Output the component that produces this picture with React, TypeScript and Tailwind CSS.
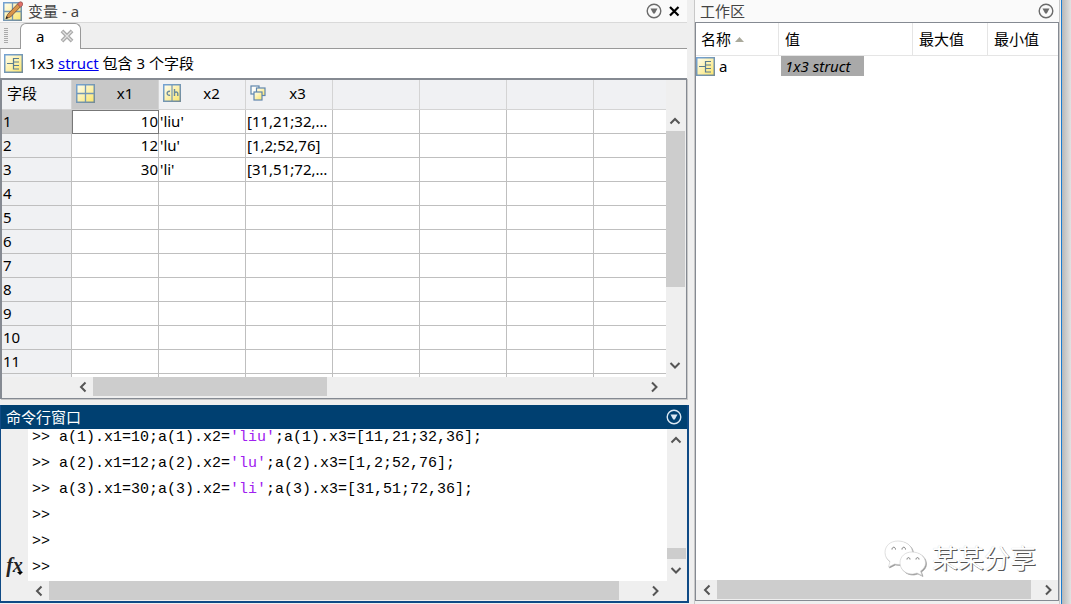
import type { ReactNode } from "react";

interface Field {
  name: string;
  icon: ReactNode;
  values: string[];
}

interface Command {
  before: string;
  text: string;
  after: string;
}

const NUMBERED_ROWS = 11;

const COMMANDS: Command[] = [
  { before: "a(1).x1=10;a(1).x2=", text: "'liu'", after: ";a(1).x3=[11,21;32,36];" },
  { before: "a(2).x1=12;a(2).x2=", text: "'lu'", after: ";a(2).x3=[1,2;52,76];" },
  { before: "a(3).x1=30;a(3).x2=", text: "'li'", after: ";a(3).x3=[31,51;72,36];" },
];

function IconDefs() {
  return (
    <svg className="absolute h-0 w-0" aria-hidden="true">
      <defs>
        <linearGradient id="yellow" x1="0" y1="0" x2="1" y2="1">
          <stop offset="0" stopColor="#fffef2" />
          <stop offset="1" stopColor="#fbe56a" />
        </linearGradient>
        <linearGradient id="frame" x1="0" y1="0" x2="1" y2="1">
          <stop offset="0" stopColor="#74a3d3" />
          <stop offset="1" stopColor="#748c98" />
        </linearGradient>
      </defs>
    </svg>
  );
}

function StructIcon() {
  return (
    <svg viewBox="0 0 19 19" className="h-[19px] w-[19px] shrink-0">
      <rect x=".75" y=".75" width="17.5" height="17.5" fill="url(#yellow)" stroke="url(#frame)" strokeWidth="1.5" />
      <path d="M3 9.5h6M15 4.500H9.500v10.500H15M9.500 8h5.500M9.500 11.500h5.500" fill="none" stroke="#5b7c8f" strokeWidth="1.200" />
    </svg>
  );
}

function MatrixIcon() {
  return (
    <svg viewBox="0 0 19 19" className="h-[19px] w-[19px] shrink-0">
      <rect x=".75" y=".75" width="17.5" height="17.5" fill="url(#yellow)" stroke="url(#frame)" strokeWidth="1.5" />
      <path d="M9.500 1v17M1 9.500h17" stroke="#7396b4" strokeWidth="1.300" />
    </svg>
  );
}

function CharIcon() {
  return (
    <svg viewBox="0 0 18 18" className="h-[18px] w-[18px] shrink-0">
      <rect x=".75" y=".75" width="16.5" height="16.5" fill="url(#yellow)" stroke="url(#frame)" strokeWidth="1.500" />
      <path d="M9 1v16" stroke="#7396b4" strokeWidth="1.200" />
      <path
        d="M7 7.500a2 2 0 1 0 0 3.600M11.500 5v7M11.500 9c.5-1.500 3.300-1.500 3.300.5V12"
        fill="none"
        stroke="#6a8a9c"
        strokeWidth="1.400"
      />
    </svg>
  );
}

function MixedIcon() {
  return (
    <svg viewBox="0 0 16 16" className="h-4 w-4 shrink-0" stroke="#5f86ad" strokeWidth="1.200">
      <rect x="1" y="1" width="8" height="8" fill="#fdfdf8" />
      <rect x="6.500" y="3" width="8.500" height="7.500" fill="url(#yellow)" />
      <rect x="4" y="7" width="8" height="8" fill="url(#yellow)" />
    </svg>
  );
}

function VariableEditorIcon() {
  return (
    <svg viewBox="0 0 20 20" className="h-5 w-5 shrink-0">
      <rect x=".75" y="1.75" width="17.5" height="17.5" fill="url(#yellow)" stroke="url(#frame)" strokeWidth="1.500" />
      <path d="M9.500 2v17M1 10.500h17" stroke="#7396b4" strokeWidth="1.300" />
      <path d="M3 17.500l1.500-4L15 2.500l3 2.700L7.500 16z" fill="#d9954a" stroke="#6b4a33" strokeWidth=".8" />
      <path d="M14.500 3l2-2q1.500-.8 2.800.6t.2 2.700l-2 2z" fill="#e0706a" stroke="#7c4542" strokeWidth=".6" />
      <path d="M2.500 18l1-2.800 1.800 1.800z" fill="#222" />
    </svg>
  );
}

function MenuButton({ label, light }: { label: string; light?: boolean }) {
  return (
    <button type="button" aria-label={label} className={light ? "text-[#dbe8f3]" : "text-[#6b6b6b]"}>
      <svg viewBox="0 0 16 16" className="h-4 w-4">
        <circle cx="8" cy="8" r="6.800" fill="none" stroke="currentColor" strokeWidth="1.400" />
        <path d="M4.500 5.500h7L8.800 10.500H7.200z" fill="currentColor" />
      </svg>
    </button>
  );
}

const ARROWS = {
  up: "M1.500 8.500L6 4l4.500 4.500",
  down: "M1.500 4L6 8.500 10.500 4",
  left: "M8.500 1.500L4 6l4.500 4.500",
  right: "M4 1.500L8.500 6 4 10.500",
};

function ScrollArrow({ direction }: { direction: keyof typeof ARROWS }) {
  const vertical = direction === "up" || direction === "down";
  return (
    <button
      type="button"
      aria-label={`Scroll ${direction}`}
      className={`flex shrink-0 items-center justify-center text-[#555] ${
        vertical ? "h-[21px] w-[18px]" : "h-[19px] w-[21px]"
      }`}
    >
      <svg viewBox="0 0 12 12" className="h-3 w-3">
        <path d={ARROWS[direction]} fill="none" stroke="currentColor" strokeWidth="2" />
      </svg>
    </button>
  );
}

function VariablesPanel() {
  const fields: Field[] = [
    { name: "x1", icon: <MatrixIcon />, values: ["10", "12", "30"] },
    { name: "x2", icon: <CharIcon />, values: ["'liu'", "'lu'", "'li'"] },
    { name: "x3", icon: <MixedIcon />, values: ["[11,21;32,36]", "[1,2;52,76]", "[31,51;72,36]"] },
    { name: "", icon: null, values: [] },
    { name: "", icon: null, values: [] },
    { name: "", icon: null, values: [] },
    { name: "", icon: null, values: [] },
  ];
  // a few unnumbered rows fill the space below the last one
  const rows = Array.from({ length: NUMBERED_ROWS + 20 }, (_, i) => i);

  return (
    <section className="mr-[2px] flex min-h-0 flex-1 flex-col bg-white">
      <header className="flex h-[23px] shrink-0 items-center border-b border-[#d9d9d9] bg-[#fafafa] pl-[3px] pr-[5px]">
        <VariableEditorIcon />
        <h2 className="flex-1 pl-[5px] text-[#444]">变量 - a</h2>
        <MenuButton label="变量菜单" />
        <button type="button" aria-label="关闭" className="ml-1 text-black">
          <svg viewBox="0 0 16 16" className="h-4 w-4">
            <path d="M4 4l8.500 8.500M12.500 4L4 12.500" stroke="currentColor" strokeWidth="2.200" />
          </svg>
        </button>
      </header>

      <div className="flex h-[26px] shrink-0 items-end border-b border-[#999] bg-[#efefef]">
        <div className="mb-1 ml-1 mr-3 h-4 w-1 bg-[repeating-linear-gradient(#aaa_0_1px,transparent_1px_2px)]" />
        <div className="-mb-px flex h-[26px] w-[61px] items-center rounded-t-md border border-b-0 border-[#999] bg-white pb-px pl-[15px] pr-1">
          <button type="button" className="flex-1 text-left">
            a
          </button>
          <button type="button" aria-label="关闭 a" className="text-[#aaa]">
            <svg viewBox="0 0 16 16" className="h-[18px] w-[18px]">
              <path d="M3.500 3.500l9 9M12.500 3.500l-9 9" stroke="currentColor" strokeWidth="3.400" />
              <path d="M4 4l8 8M12 4l-8 8" stroke="#e3e3e3" strokeWidth="1" />
            </svg>
          </button>
        </div>
      </div>

      <div className="flex h-[29px] shrink-0 items-center border-l border-[#c8c8c8] pb-px pl-[3px]">
        <StructIcon />
        <p className="pl-[6px]">
          1x3{" "}
          <a href="#struct" className="text-[#0000ee] underline">
            struct
          </a>{" "}
          包含 3 个字段
        </p>
      </div>

      <div className="flex min-h-0 flex-1 flex-col border border-l-2 border-t-2 border-[#858a92] bg-[#efefef] shadow-[1px_1px_0_#c8c8c8]">
        <div className="flex min-h-0 flex-1">
          <div className="min-w-0 flex-1 overflow-hidden bg-white">
            <table className="w-full table-fixed border-separate border-spacing-0 bg-white text-left">
              <colgroup>
                <col className="w-[70px]" />
                <col className="w-[87px]" />
                <col className="w-[87px]" />
                <col className="w-[87px]" />
                <col className="w-[87px]" />
                <col className="w-[87px]" />
                <col className="w-[87px]" />
                <col />
              </colgroup>
              <thead>
                <tr className="h-[30px] bg-[#f0f1f3]">
                  <th className="border-b border-r border-[#d4d4d4] pb-[3px] pl-[5px] font-normal">字段</th>
                  {fields.map((field, i) => (
                    <th
                      key={i}
                      className={`border-b border-r border-[#d4d4d4] p-0 pb-[3px] font-normal last:border-r-0 ${
                        i === 0 ? "bg-[#c8c8c8]" : ""
                      }`}
                    >
                      <div className="flex items-center pl-1 pr-[3px]">
                        {field.icon}
                        <span className="flex-1 text-center">{field.name}</span>
                      </div>
                    </th>
                  ))}
                </tr>
              </thead>
              <tbody className="leading-[23px]">
                {rows.map((row) => (
                  <tr key={row} className="h-6">
                    <th
                      scope="row"
                      className={`border-b border-r border-[#bfbfbf] py-0 pl-px font-normal ${
                        row === 0 ? "bg-[#c8c8c8]" : "bg-[#f0f1f3]"
                      }`}
                    >
                      {row < NUMBERED_ROWS && row + 1}
                    </th>
                    {fields.map((field, i) => (
                      <td
                        key={i}
                        className={`truncate border-b border-r border-[#bfbfbf] py-0 last:border-r-0 ${
                          i === 0 ? "text-right" : "pl-px"
                        } ${row === 0 && i === 0 ? "outline-1 -outline-offset-1 outline-[#777]" : ""}`}
                      >
                        {field.values[row]}
                      </td>
                    ))}
                  </tr>
                ))}
              </tbody>
            </table>
          </div>
          <div className="flex w-[20px] shrink-0 flex-col pb-[2px] pt-[30px]">
            <ScrollArrow direction="up" />
            <div className="h-[156px] w-[19px] bg-[#cdcdcd]" />
            <div className="flex-1" />
            <ScrollArrow direction="down" />
          </div>
        </div>
        <div className="flex h-[21px] shrink-0 items-start pl-[70px] pr-[22px]">
          <ScrollArrow direction="left" />
          <div className="h-[19px] w-[234px] bg-[#cdcdcd]" />
          <div className="flex-1" />
          <ScrollArrow direction="right" />
        </div>
      </div>
    </section>
  );
}

function CommandWindow() {
  return (
    <section className="flex h-[198px] shrink-0 flex-col border-2 border-l border-t-0 border-[#0f4a85] bg-[#efefef]">
      <header className="flex h-6 shrink-0 items-center bg-[#004071] pl-[5px] pr-[5px] text-white">
        <h2 className="flex-1">命令行窗口</h2>
        <MenuButton label="命令行窗口菜单" light />
      </header>

      <div className="flex min-h-0 flex-1">
        <div className="flex w-[27px] shrink-0 flex-col items-center justify-end pb-[2px]">
          <button
            type="button"
            aria-label="浏览函数"
            className="relative font-['Liberation_Serif',serif] text-xl font-bold italic leading-7 text-[#222]"
          >
            fx
            <svg viewBox="0 0 6 3" className="absolute bottom-1 right-0 h-[3px] w-[6px]">
              <path d="M0 0h6L3 3z" />
            </svg>
          </button>
        </div>
        <div className="flex min-w-0 flex-1 flex-col justify-end overflow-hidden bg-white pl-1 font-['Liberation_Mono',monospace] leading-[26px]">
          {COMMANDS.map((command) => (
            <p key={command.before} className="whitespace-pre">
              {">> "}
              {command.before}
              <span className="text-[#a020f0]">{command.text}</span>
              {command.after}
            </p>
          ))}
          <p>{">>"}</p>
          <p>{">>"}</p>
          <p>{">>"}</p>
        </div>
        <div className="flex w-[20px] shrink-0 flex-col pb-px">
          <ScrollArrow direction="up" />
          <div className="flex-1" />
          <div className="h-[11px] w-[19px] bg-[#cdcdcd]" />
          <ScrollArrow direction="down" />
        </div>
      </div>

      <div className="flex h-5 shrink-0 items-start pl-[27px] pr-[22px]">
        <ScrollArrow direction="left" />
        <div className="h-[19px] flex-1 bg-[#cdcdcd]" />
        <div className="w-[25px]" />
        <ScrollArrow direction="right" />
      </div>
    </section>
  );
}

function Watermark() {
  return (
    <div className="absolute bottom-6 right-[22px] flex items-center gap-[6px]">
      <svg viewBox="0 0 42 36" className="h-9 w-[42px] drop-shadow-[1px_1px_0_#999]" fill="#fff" stroke="#ccc" strokeWidth=".6">
        <path d="M14 1C6 1 1 6 1 12.500c0 4 2 7 5 9L4.500 27l6-3c8 2 18-2 18-11.500C28.500 6 22 1 14 1z" />
        <path d="M28 12c-7 0-12 4.500-12 11s6 11.500 13 11l4-1 5 2.500-1.500-4.500c3-2 5-4.500 5-8 0-6.500-6-11-13.500-11z" />
        <path
          d="M8 9.500c0-3 3.500-3 3.500 0M18 9.500c0-3 3.500-3 3.500 0M23 19.500c0-2.500 3-2.500 3 0M32 19.500c0-2.500 3-2.500 3 0"
          fill="none"
          stroke="#777"
          strokeWidth="1"
        />
      </svg>
      <span className="text-[26px] leading-9 text-white [text-shadow:1px_1px_0_#555,0_0_1px_#ccc]">某某分享</span>
    </div>
  );
}

function WorkspacePanel() {
  return (
    <section className="flex w-[366px] shrink-0 flex-col border-x border-[#c8c8c8] bg-[#efefef] pb-[3px]">
      <header className="flex h-[22px] shrink-0 items-center bg-[#fafafa] pb-px pl-[5px] pr-[5px]">
        <h2 className="flex-1 text-[#444]">工作区</h2>
        <MenuButton label="工作区菜单" />
      </header>

      <div className="relative flex min-h-0 flex-1 flex-col border border-[#858a92] bg-white">
        <div className="flex-1">
          <table className="w-full table-fixed border-separate border-spacing-0 text-left">
            <colgroup>
              <col className="w-[83px]" />
              <col />
              <col className="w-[75px]" />
              <col className="w-[70px]" />
            </colgroup>
            <thead>
              <tr className="h-[33px]">
                <th className="border-b border-r border-[#e5e5e5] py-0 pl-[5px] font-normal">
                  <div className="flex items-center gap-1">
                    名称
                    <svg viewBox="0 0 9 5" className="h-[5px] w-[9px]">
                      <path d="M4.500 0L9 5H0z" fill="#aaa99b" />
                    </svg>
                  </div>
                </th>
                <th className="border-b border-r border-[#e5e5e5] py-0 pl-[6px] font-normal">值</th>
                <th className="border-b border-r border-[#e5e5e5] py-0 pl-[6px] font-normal">最大值</th>
                <th className="border-b border-[#e5e5e5] py-0 pl-[6px] font-normal">最小值</th>
              </tr>
            </thead>
            <tbody>
              <tr>
                <td className="p-0">
                  <div className="flex items-center gap-1">
                    <StructIcon />a
                  </div>
                </td>
                <td className="p-0 pl-[2px]">
                  <div className="w-[83px] bg-[#a9a9a9] pl-1 italic">1x3 struct</div>
                </td>
                <td className="p-0" />
                <td className="p-0" />
              </tr>
            </tbody>
          </table>
        </div>
        <Watermark />
        <div className="flex h-5 shrink-0 items-start bg-[#efefef]">
          <ScrollArrow direction="left" />
          <div className="mr-[6px] h-[19px] flex-1 bg-[#cdcdcd]" />
          <ScrollArrow direction="right" />
        </div>
      </div>
    </section>
  );
}

function App() {
  return (
    <div className="flex h-screen min-h-[440px] min-w-[800px] overflow-hidden bg-[#efefef] font-['Noto_Sans','Noto_Sans_CJK_SC',sans-serif] text-[15px] leading-5 text-black">
      <IconDefs />
      <main className="flex min-w-0 flex-1 flex-col gap-[6px] pb-px">
        <VariablesPanel />
        <CommandWindow />
      </main>
      <div className="w-[5px] shrink-0" />
      <WorkspacePanel />
      <div className="ml-px w-[10px] shrink-0 border-l border-[#1c7cd0] bg-linear-to-r from-[#b8b8b8] to-[#e2e2e2]" />
    </div>
  );
}

export default App;
